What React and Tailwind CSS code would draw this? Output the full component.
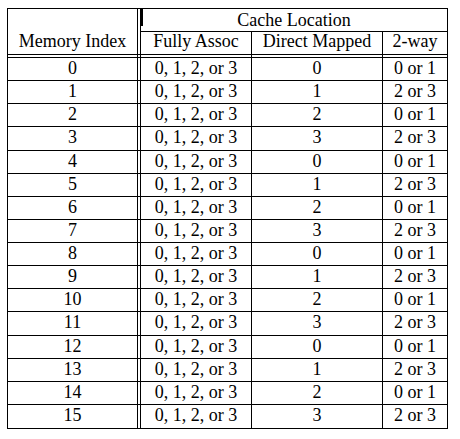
import React from "react";

const rows = [
  ["0", "0, 1, 2, or 3", "0", "0 or 1"],
  ["1", "0, 1, 2, or 3", "1", "2 or 3"],
  ["2", "0, 1, 2, or 3", "2", "0 or 1"],
  ["3", "0, 1, 2, or 3", "3", "2 or 3"],
  ["4", "0, 1, 2, or 3", "0", "0 or 1"],
  ["5", "0, 1, 2, or 3", "1", "2 or 3"],
  ["6", "0, 1, 2, or 3", "2", "0 or 1"],
  ["7", "0, 1, 2, or 3", "3", "2 or 3"],
  ["8", "0, 1, 2, or 3", "0", "0 or 1"],
  ["9", "0, 1, 2, or 3", "1", "2 or 3"],
  ["10", "0, 1, 2, or 3", "2", "0 or 1"],
  ["11", "0, 1, 2, or 3", "3", "2 or 3"],
  ["12", "0, 1, 2, or 3", "0", "0 or 1"],
  ["13", "0, 1, 2, or 3", "1", "2 or 3"],
  ["14", "0, 1, 2, or 3", "2", "0 or 1"],
  ["15", "0, 1, 2, or 3", "3", "2 or 3"],
];

export default function App() {
  return (
    <div className="w-[460px] h-[439px] bg-white pt-[8px] pl-[7px] font-['Liberation_Serif',serif] text-[18px] text-black">
      <div className="w-[441px] border border-black">
        {/* Header */}
        <div className="flex h-[46px] border-b border-black">
          <div className="w-[130px] border-r border-black flex items-end justify-center pb-[3px] leading-[20px]">
            Memory Index
          </div>
          <div className="w-[2px]" />
          <div className="w-[307px] flex flex-col">
            <div className="relative h-[23px] border-l border-b border-black flex justify-center pt-[1px] leading-[20px]">
              <span className="absolute left-0 top-0 w-[2px] h-[17px] bg-black" />
              Cache Location
            </div>
            <div className="flex flex-1 leading-[18px]">
              <div className="w-[112px] border-x border-black text-center">Fully Assoc</div>
              <div className="w-[131px] border-r border-black text-center">Direct Mapped</div>
              <div className="w-[64px] text-center">2-way</div>
            </div>
          </div>
        </div>

        {/* Gap between double rules */}
        <div className="flex h-[2px]">
          <div className="w-[130px] border-r border-black" />
          <div className="w-[2px]" />
          <div className="w-[112px] border-x border-black" />
          <div className="w-[131px] border-r border-black" />
          <div className="w-[64px]" />
        </div>

        {/* Body */}
        <div className="border-t border-black">
          {rows.map((r, i) => (
            <div key={i} className="flex h-[23.125px] border-b border-black last:border-b-0 leading-[20px]">
              <div className="w-[130px] border-r border-black text-center">{r[0]}</div>
              <div className="w-[2px]" />
              <div className="w-[112px] border-x border-black text-center">{r[1]}</div>
              <div className="w-[131px] border-r border-black text-center">{r[2]}</div>
              <div className="w-[64px] text-center">{r[3]}</div>
            </div>
          ))}
        </div>
      </div>
    </div>
  );
}
